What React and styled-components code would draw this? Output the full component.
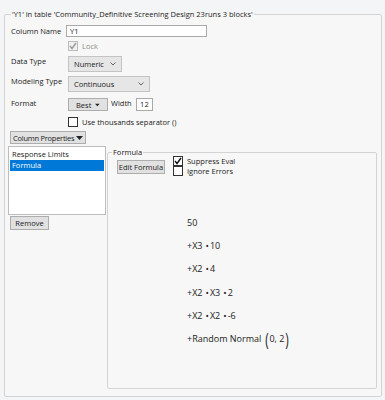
import React from 'react';
import styled, { createGlobalStyle } from 'styled-components';

const GlobalStyle = createGlobalStyle`
  html, body {
    margin: 0;
    padding: 0;
    background: #f4f5f6;
  }
  body {
    font-family: "Open Sans", "Noto Sans", sans-serif;
    font-size: 7.5px;
    line-height: 10px;
    color: #1a1a1a;
  }
`;

const Page = styled.div`
  box-sizing: border-box;
  width: 385px;
  height: 400px;
  padding: 9px 3px 3px 4px;
  display: flex;
  flex-direction: column;
`;

const Group = styled.fieldset`
  box-sizing: border-box;
  margin: 0;
  padding: ${props => props.pad};
  border: 1px solid #d3d3d3;
  border-radius: 2px;
  background: #f7f7f7;
  display: flex;
  flex-direction: column;
  min-width: 0;
  min-height: 0;
  flex: 1;
`;

const Legend = styled.legend`
  padding: 0 1px;
  margin-left: ${props => props.shift || 0}px;
  line-height: 10px;
  color: #1a1a1a;
`;

const Row = styled.div`
  display: flex;
  align-items: ${props => props.align || 'center'};
  height: ${props => props.h}px;
  margin-top: ${props => props.top || 0}px;
  padding-left: 3px;
`;

const Label = styled.div`
  width: 57px;
  flex: none;
`;

const TextInput = styled.div`
  box-sizing: border-box;
  width: ${props => props.w}px;
  height: ${props => props.h || 12}px;
  margin-left: ${props => props.shift || 0}px;
  background: #fff;
  border: 1px solid #a9a9a9;
  padding: 0 3px;
  line-height: 10px;
  text-align: ${props => props.right ? 'right' : 'left'};
`;

const Dropdown = styled.div`
  box-sizing: border-box;
  width: ${props => props.w}px;
  height: 16px;
  display: flex;
  align-items: center;
  justify-content: space-between;
  padding: 0 5px 0 5px;
  background: #e6e6e6;
  border: 1px solid #c4c4c4;
`;

const Button = styled.div`
  box-sizing: border-box;
  display: inline-flex;
  align-items: center;
  justify-content: ${props => props.center ? 'center' : 'flex-start'};
  gap: ${props => props.gap || 4}px;
  width: ${props => props.w ? `${props.w}px` : 'auto'};
  height: ${props => props.h || 13}px;
  padding: 0 ${props => props.px || 4}px;
  margin-left: ${props => props.ml || 0}px;
  margin-top: ${props => props.mt || 0}px;
  letter-spacing: ${props => props.tight ? '-0.25px' : 'normal'};
  background: #e1e1e1;
  border: 1px solid #adadad;
  flex: none;
  white-space: nowrap;
`;

const CheckRow = styled.div`
  display: flex;
  align-items: center;
  gap: 4px;
  color: ${props => props.disabled ? '#8c8c8c' : '#1a1a1a'};
`;

const Box = styled.div`
  box-sizing: border-box;
  width: 10px;
  height: 10px;
  flex: none;
  background: ${props => props.disabled ? '#f0f0f0' : '#fff'};
  border: 1px solid ${props => props.disabled ? '#bcbcbc' : '#333'};
  display: flex;
  align-items: center;
  justify-content: center;
`;

const Gap = styled.span`
  display: inline-block;
  width: ${props => props.w}px;
`;

const Bottom = styled.div`
  display: flex;
  flex: 1;
  min-height: 0;
  margin-top: 4px;
  gap: 1px;
`;

const LeftCol = styled.div`
  width: 98px;
  flex: none;
  display: flex;
  flex-direction: column;
  align-items: flex-start;
`;

const ListBox = styled.div`
  box-sizing: border-box;
  width: 98px;
  height: 69px;
  margin-top: 2px;
  background: #fff;
  border: 1px solid #bdbdbd;
  padding: 2px 1px;
  display: flex;
  flex-direction: column;
`;

const ListItem = styled.div`
  height: 11px;
  line-height: 11px;
  padding-left: 2px;
  background: ${props => props.selected ? '#0078d7' : 'transparent'};
  color: ${props => props.selected ? '#fff' : '#1a1a1a'};
`;

const FormulaArea = styled.div`
  margin-top: 16px;
  flex: 1;
  display: flex;
  min-width: 0;
`;

const Toolbar = styled.div`
  display: flex;
  align-items: flex-start;
  gap: 8px;
  margin-top: 3px;
`;

const Checks = styled.div`
  display: flex;
  flex-direction: column;
  margin-top: -4px;
`;

const Expression = styled.div`
  display: flex;
  flex-direction: column;
  gap: 13.2px;
  margin: 42px 0 0 70px;
  font-size: 9px;
  line-height: 10px;
  color: #222;
`;

const Term = styled.div`
  display: flex;
  align-items: center;
  height: 10px;
  white-space: pre;
`;

const Dot = styled.span`
  margin: 0 1px 0 3px;
`;

const Paren = styled.span`
  display: inline-block;
  font-size: 13px;
  transform: scale(0.9, 1.45);
  margin: 0 1px;
`;

const Chevron = () => (
  <svg width="6" height="4" viewBox="0 0 6 4">
    <polyline points="0.5,0.5 3,3 5.5,0.5" fill="none" stroke="#555" strokeWidth="0.9" />
  </svg>
);

const Triangle = () => (
  <svg width="7" height="4" viewBox="0 0 7 4">
    <polygon points="0,0 7,0 3.5,4" fill="#222" />
  </svg>
);

const Tick = ({ color }) => (
  <svg width="8" height="8" viewBox="0 0 8 8">
    <polyline points="1,4 3,6.5 7,1" fill="none" stroke={color} strokeWidth="1.4" />
  </svg>
);

const Check = ({ checked, disabled, children }) => (
  <CheckRow disabled={disabled}>
    <Box disabled={disabled}>{checked && <Tick color={disabled ? '#9a9a9a' : '#111'} />}</Box>
    {children}
  </CheckRow>
);

const Mul = () => <Dot>•</Dot>;

const App = () => (
  <>
    <GlobalStyle />
    <Page>
      <Group pad="0 4px 7px 3px">
        <Legend shift={3}>'Y1' in table 'Community_Definitive Screening Design 23runs 3 blocks'</Legend>

        <Row h={12} top={6}>
          <Label>Column Name</Label>
          <TextInput w={141} shift={-2}>Y1</TextInput>
        </Row>

        <Row h={10} top={4}>
          <Label />
          <Check checked disabled>Lock</Check>
        </Row>

        <Row h={16} top={5} align="flex-start">
          <Label>Data Type</Label>
          <Dropdown w={54}>Numeric <Chevron /></Dropdown>
        </Row>

        <Row h={16} top={4} align="flex-start">
          <Label>Modeling Type</Label>
          <Dropdown w={82}>Continuous <Chevron /></Dropdown>
        </Row>

        <Row h={13} top={6} align="flex-start">
          <Label>Format</Label>
          <Button w={40} px={7} center>Best <Triangle /></Button>
          <Gap w={3} />
          Width
          <Gap w={4} />
          <TextInput w={17} h={13} right>12</TextInput>
        </Row>

        <Row h={10} top={6}>
          <Label />
          <Check>Use thousands separator ()</Check>
        </Row>

        <Bottom>
          <LeftCol>
            <Button h={13} px={2} gap={2} ml={2} tight>Column Properties <Triangle /></Button>
            <ListBox>
              <ListItem>Response Limits</ListItem>
              <ListItem selected>Formula</ListItem>
            </ListBox>
            <Button w={39} h={14} px={3} ml={2} mt={1} center>Remove</Button>
          </LeftCol>

          <FormulaArea>
            <Group pad="0 8px 4px 9px">
              <Legend shift={-5}>Formula</Legend>
              <Toolbar>
                <Button w={48} h={14} px={2} center>Edit Formula</Button>
                <Checks>
                  <Check checked>Suppress Eval</Check>
                  <Check>Ignore Errors</Check>
                </Checks>
              </Toolbar>
              <Expression>
                <Term>50</Term>
                <Term>+X3<Mul />10</Term>
                <Term>+X2<Mul />4</Term>
                <Term>+X2<Mul />X3<Mul />2</Term>
                <Term>+X2<Mul />X2<Mul />-6</Term>
                <Term>+Random Normal <Paren>(</Paren>0, 2<Paren>)</Paren></Term>
              </Expression>
            </Group>
          </FormulaArea>
        </Bottom>
      </Group>
    </Page>
  </>
);

export default App;
